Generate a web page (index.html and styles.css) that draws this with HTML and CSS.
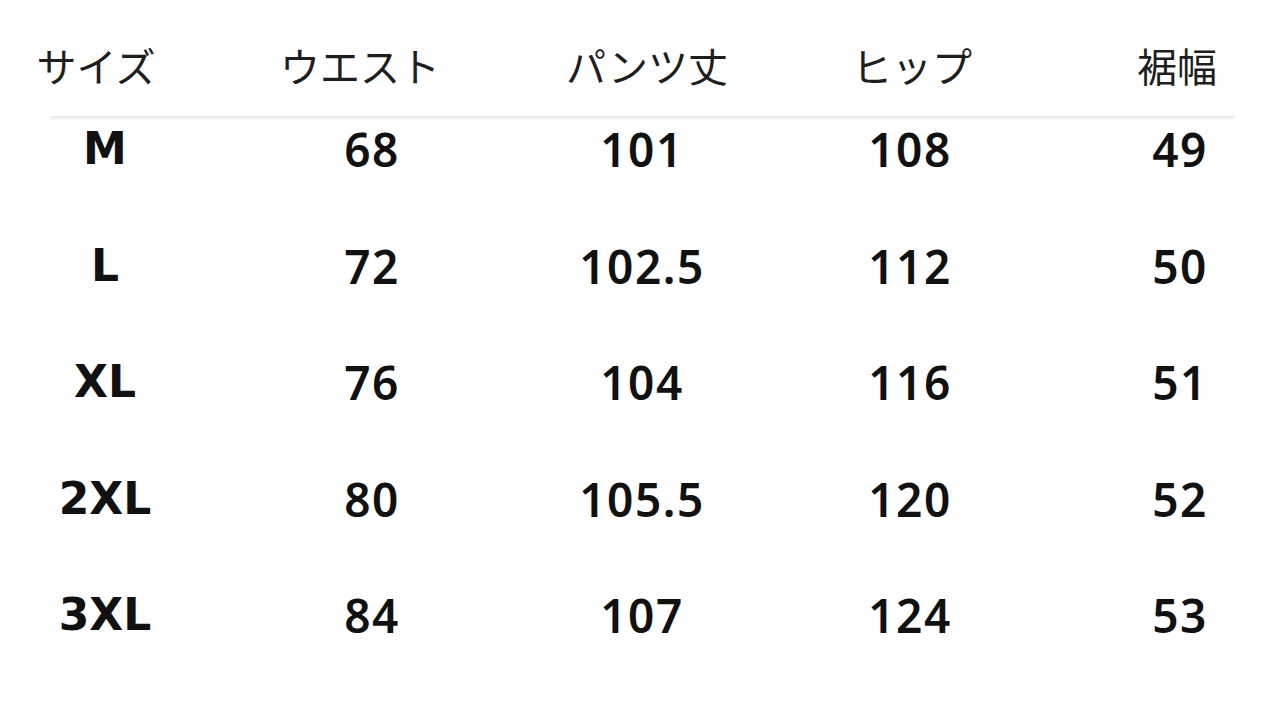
FILE: index.html
```html
<!DOCTYPE html>
<html lang="ja">
<head>
<meta charset="utf-8">
<link rel="stylesheet" href="styles.css">
</head>
<body>
<div class="chart">
  <div class="row head">
    <div>サイズ</div><div>ウエスト</div><div>パンツ丈</div><div>ヒップ</div><div>裾幅</div>
  </div>
  <div class="rule"></div>
  <div class="rows">
    <div class="row data"><div class="size">M</div><div>68</div><div>101</div><div>108</div><div>49</div></div>
    <div class="row data"><div class="size">L</div><div>72</div><div>102.5</div><div>112</div><div>50</div></div>
    <div class="row data"><div class="size">XL</div><div>76</div><div>104</div><div>116</div><div>51</div></div>
    <div class="row data"><div class="size">2XL</div><div>80</div><div>105.5</div><div>120</div><div>52</div></div>
    <div class="row data"><div class="size">3XL</div><div>84</div><div>107</div><div>124</div><div>53</div></div>
  </div>
</div>
</body>
</html>
```
FILE: styles.css
```css
html, body {
  margin: 0;
  padding: 0;
  background: #fff;
}
body {
  width: 1280px;
  height: 710px;
  overflow: hidden;
}
.chart {
  padding-top: 35px;
}
.row {
  display: grid;
  grid-template-columns: 210px 324px 216px 320px 210px;
  text-align: center;
}
.head {
  height: 60px;
  line-height: 60px;
  font-family: "Noto Sans CJK JP", sans-serif;
  font-size: 40px;
  font-weight: 400;
  color: #1e1e1e;
}
.head > div:nth-child(1) { padding-right: 18px; }
.head > div:nth-child(2) { padding-right: 24px; }
.head > div:nth-child(3) { padding-left: 10px; }
.head > div:nth-child(4) { padding-left: 4px; }
.head > div:nth-child(5) { padding-left: 4px; }
.rule {
  margin: 21px 45px 0 50px;
  height: 4px;
  background: linear-gradient(#e6e6e6, #fbfbfb);
}
.rows {
  display: flex;
  flex-direction: column;
  gap: 54.5px;
  margin-top: -2px;
}
.data {
  height: 62px;
  line-height: 62px;
  font-family: "Noto Sans", sans-serif;
  font-size: 46px;
  font-weight: 600;
  letter-spacing: 1.5px;
  color: #111;
}
.data > div:nth-child(5) { padding-left: 10px; }
.data .size {
  font-family: "DejaVu Sans", sans-serif;
  font-weight: 700;
  font-size: 44px;
  letter-spacing: 0;
}
```
